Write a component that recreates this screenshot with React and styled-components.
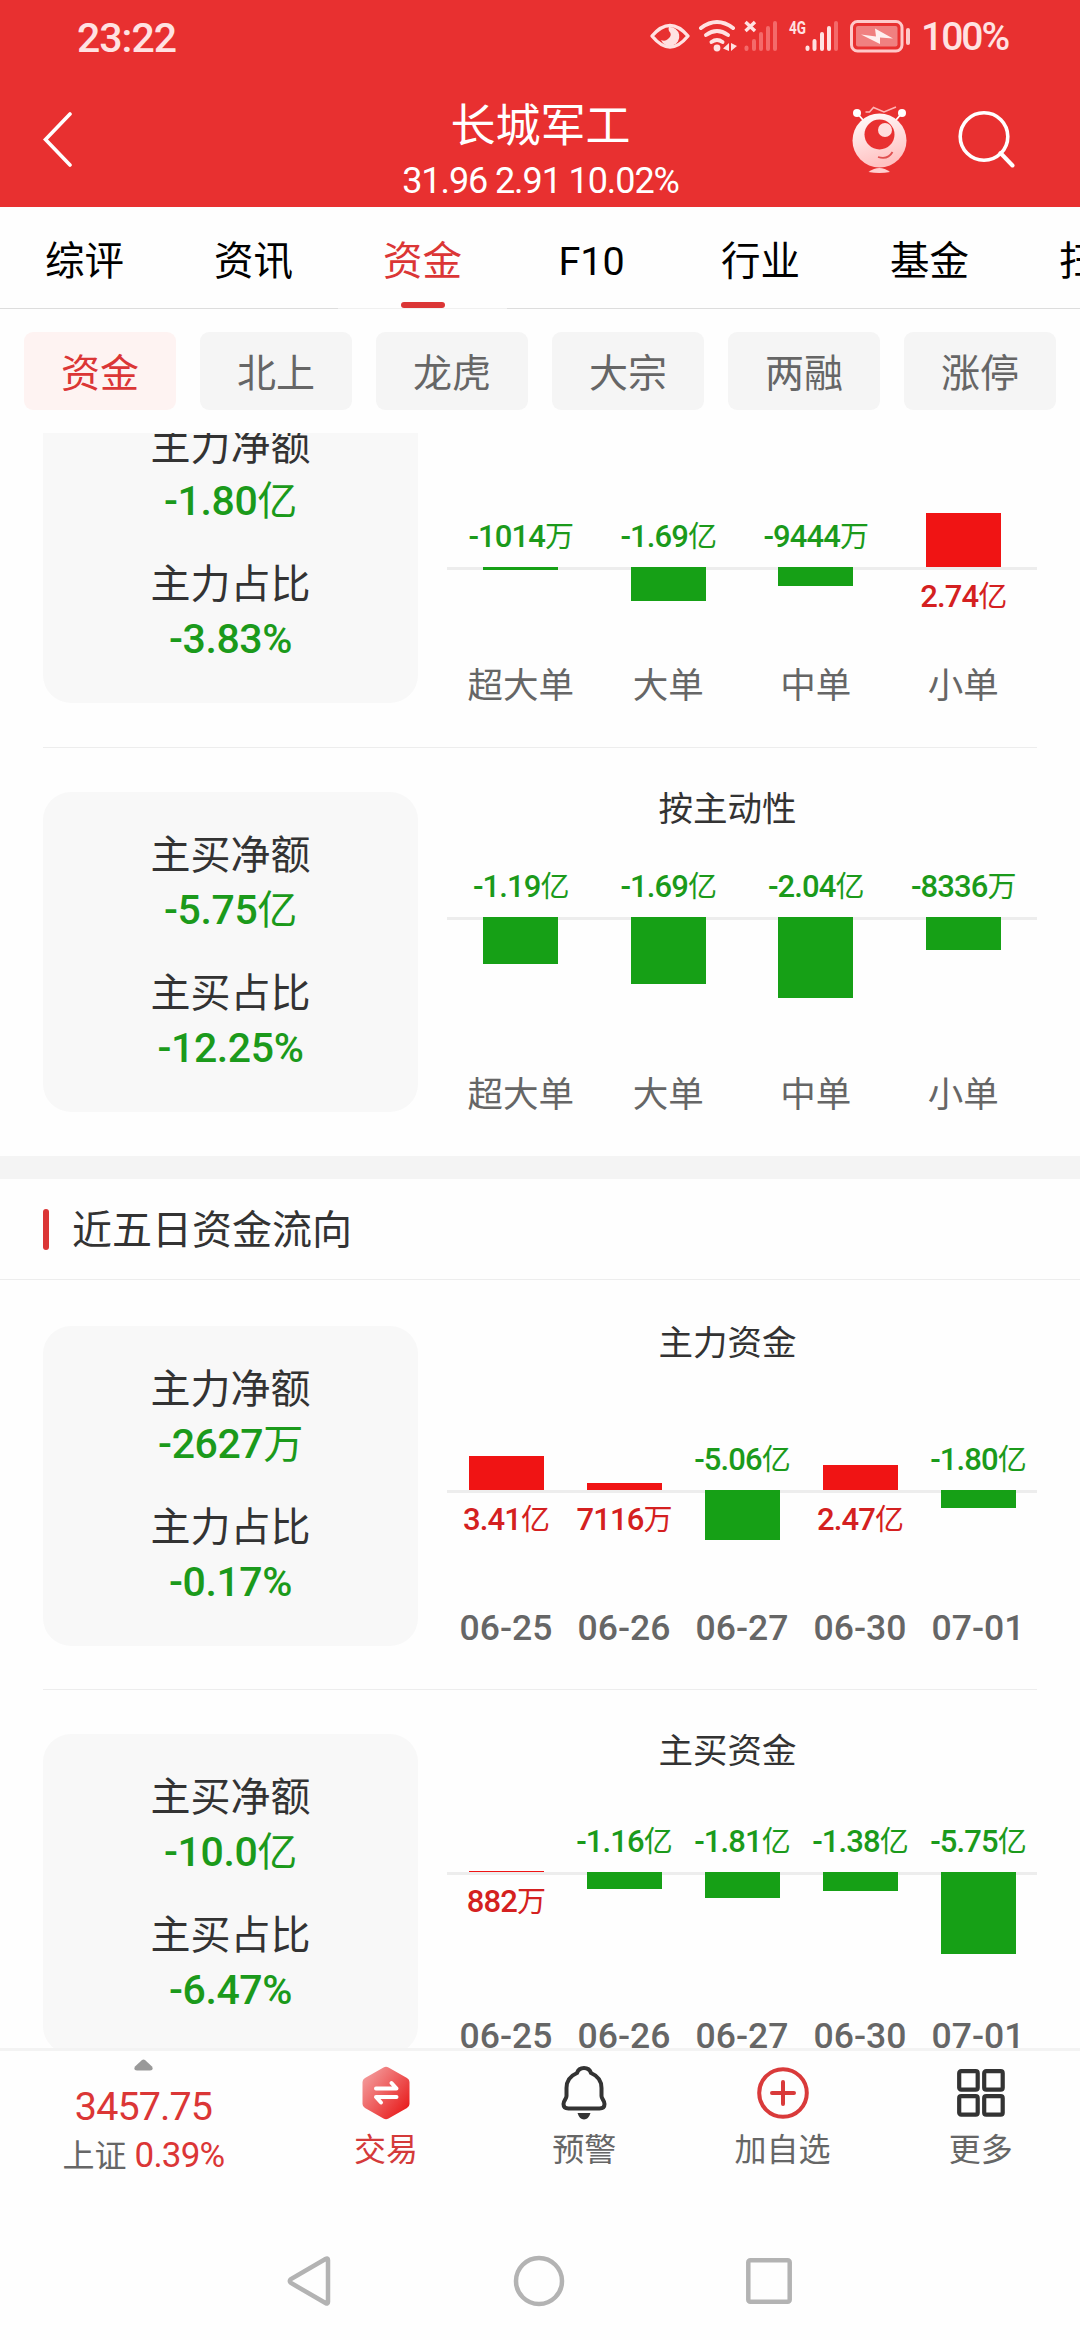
import React from "react"
import styled, { createGlobalStyle } from "styled-components"

const color = {
  header: "#e83030",
  primary: "#db3636",
  up: "#f01414",
  upText: "#d42020",
  down: "#16a016",
  downText: "#1b9a1b",
  gray50: "#f8f8f8",
  gray100: "#f4f4f4",
  gray200: "#ededed",
  gray600: "#666",
  gray800: "#333",
}

const tabs = ["综评", "资讯", "资金", "F10", "行业", "基金", "扫雷"]
const chips = ["资金", "北上", "龙虎", "大宗", "两融", "涨停"]

const todayMain = [
  { label: "超大单", value: "-1014", unit: "万", size: 3 },
  { label: "大单", value: "-1.69", unit: "亿", size: 34 },
  { label: "中单", value: "-9444", unit: "万", size: 19 },
  { label: "小单", value: "2.74", unit: "亿", size: 54 },
]

const todayActive = [
  { label: "超大单", value: "-1.19", unit: "亿", size: 47 },
  { label: "大单", value: "-1.69", unit: "亿", size: 67 },
  { label: "中单", value: "-2.04", unit: "亿", size: 81 },
  { label: "小单", value: "-8336", unit: "万", size: 33 },
]

const fiveMain = [
  { label: "06-25", value: "3.41", unit: "亿", size: 34 },
  { label: "06-26", value: "7116", unit: "万", size: 7 },
  { label: "06-27", value: "-5.06", unit: "亿", size: 50 },
  { label: "06-30", value: "2.47", unit: "亿", size: 25 },
  { label: "07-01", value: "-1.80", unit: "亿", size: 18 },
]

const fiveActive = [
  { label: "06-25", value: "882", unit: "万", size: 1 },
  { label: "06-26", value: "-1.16", unit: "亿", size: 17 },
  { label: "06-27", value: "-1.81", unit: "亿", size: 26 },
  { label: "06-30", value: "-1.38", unit: "亿", size: 19 },
  { label: "07-01", value: "-5.75", unit: "亿", size: 82 },
]

const FlowCard = ({ name, amount, unit, ratio, chart }) => (
  <FlowRow>
    <Summary>
      <SummaryLabel>{name}净额</SummaryLabel>
      <SummaryValue>
        {amount}
        <span>{unit}</span>
      </SummaryValue>
      <SummaryLabel $second>{name}占比</SummaryLabel>
      <SummaryValue>{ratio}</SummaryValue>
    </Summary>
    {chart}
  </FlowRow>
)

const Chart = ({ title, zero, data, dates }) => (
  <ChartBox>
    <ChartTitle>{title}</ChartTitle>
    <Plot>
      <Upper $height={zero - 36}>
        {data.map((d) => (
          <Slot key={d.label} $bottom>
            {d.value.startsWith("-") ? (
              <BarValue $down>
                {d.value}
                <span>{d.unit}</span>
              </BarValue>
            ) : (
              <Bar style={{ height: d.size }} />
            )}
          </Slot>
        ))}
      </Upper>
      <Lower>
        {data.map((d) => (
          <Slot key={d.label}>
            {d.value.startsWith("-") ? (
              <Bar $down style={{ height: d.size }} />
            ) : (
              <BarValue>
                {d.value}
                <span>{d.unit}</span>
              </BarValue>
            )}
          </Slot>
        ))}
      </Lower>
      <Labels>
        {data.map((d) => (
          <AxisLabel key={d.label} $date={dates}>
            {d.label}
          </AxisLabel>
        ))}
      </Labels>
    </Plot>
  </ChartBox>
)

const StatusIcons = () => (
  <svg width="262" height="36" viewBox="648 18 262 36" fill="none">
    {/* eye */}
    <path
      d="M651 36Q669 15 687 36Q669 58 651 36Z"
      stroke="#ffe2e2"
      strokeWidth="3.4"
      strokeLinejoin="round"
    />
    <path
      d="M668 27A9.5 9.5 0 1 1 660 40Q664 42 667 39Q672 35 668 31Q667 29 668 27Z"
      fill="#ffe2e2"
    />
    {/* wifi */}
    <g stroke="#ffe2e2" strokeWidth="4" strokeLinecap="round">
      <path d="M700 28Q716 16 732 28" />
      <path d="M705 35Q716 27 727 35" />
      <path d="M710.5 42Q716 38 721.5 42" />
    </g>
    <circle cx="716" cy="48" r="3.4" fill="#ffe2e2" />
    <path d="M728 43V51L722 48.500ZM730 43L736 46L730 51Z" fill="#ffe2e2" />
    {/* sim 1, no service */}
    <path d="M744.500 22L754 31M754 22L744.500 31" stroke="#ffe2e2" strokeWidth="3.4" />
    <g stroke="#f46a6a" strokeWidth="4" strokeLinecap="round">
      <path d="M745.500 47.500V49M753 41V49M760 34V49M767 28V49M774 23V49" />
    </g>
    {/* sim 2 */}
    <text
      x="788"
      y="34"
      fill="#ffe2e2"
      fontSize="18"
      fontWeight="700"
      fontFamily="Roboto, sans-serif"
      textLength="17"
      lengthAdjust="spacingAndGlyphs"
    >
      4G
    </text>
    <g stroke="#ffe2e2" strokeWidth="4" strokeLinecap="round">
      <path d="M806.500 47.500V49M813.500 41V49M821 34V49M828 28V49" />
      <path d="M835 23V49" stroke="#f46a6a" />
    </g>
    {/* battery */}
    <rect x="850.5" y="21.500" width="50.500" height="29.500" rx="6" stroke="#ffc9c9" strokeWidth="3" />
    <rect x="855" y="26" width="41.500" height="20.500" rx="2" fill="#f08080" />
    <path d="M860 34.500L875 36.500L874 28.500L892 38.500L879 37.500L879 44Z" fill="#fff0f0" />
    <rect x="905" y="28" width="4" height="17" rx="2" fill="#ffc9c9" />
  </svg>
)

const BackIcon = () => (
  <svg width="30" height="56" viewBox="0 0 30 56" fill="none">
    <path d="M27 2L2.500 27.500L27 53" stroke="#fff" strokeWidth="3.600" strokeLinecap="round" />
  </svg>
)

const RobotIcon = () => (
  <svg width="56" height="68" viewBox="852 106 56 68" fill="none">
    <defs>
      <linearGradient id="robot" x1="0" y1="0" x2="0.3" y2="1">
        <stop offset="0" stopColor="#fff" />
        <stop offset="1" stopColor="#ffc2c2" />
      </linearGradient>
    </defs>
    <path d="M865.500 112H869.500L873.500 107.500L884 112L896 107" stroke="#ffb5b5" strokeWidth="1.6" />
    <path d="M857 113L863 120M902 113L896 120" stroke="#fff" strokeWidth="1.8" />
    <circle cx="857" cy="113" r="4" fill="#fff" />
    <circle cx="902" cy="113" r="4" fill="#fff" />
    <circle cx="879.500" cy="140.500" r="27" fill="url(#robot)" />
    <circle cx="879.500" cy="134.500" r="15" fill="#e83030" />
    <circle cx="885" cy="130" r="7" fill="#ffdede" />
    <path d="M878 157Q888 160 892.500 152" stroke="#e05050" strokeWidth="1.8" />
    <path d="M868.500 172Q879.500 164 890 172Q879.500 174 868.500 172Z" fill="#ffd0d0" />
  </svg>
)

const SearchIcon = () => (
  <svg width="58" height="58" viewBox="0 0 58 58" fill="none" stroke="#fff" strokeWidth="3.600">
    <circle cx="26" cy="26.500" r="23.800" />
    <path d="M42.500 43L54.500 55.500" strokeLinecap="round" strokeWidth="4" />
  </svg>
)

const TradeIcon = () => (
  <svg width="50" height="54" viewBox="0 0 50 54" fill="none">
    <defs>
      <linearGradient id="trade" x1="0" y1="0.1" x2="0.9" y2="0.9">
        <stop offset="0" stopColor="#f4a3a3" />
        <stop offset="1" stopColor="#e81c1c" />
      </linearGradient>
    </defs>
    <path
      d="M22.500 1.500Q25 0 27.500 1.500L46 12Q48.500 13.500 48.500 16V38Q48.500 40.500 46 42L27.500 52.500Q25 54 22.500 52.500L4 42Q1.500 40.500 1.500 38V16Q1.500 13.500 4 12Z"
      fill="url(#trade)"
    />
    <g stroke="#fff" strokeWidth="4" strokeLinecap="round" strokeLinejoin="round">
      <path d="M15 22.500H35.500L30.500 17" />
      <path d="M35.500 31H15L20 36.500" />
    </g>
  </svg>
)

const BellIcon = () => (
  <svg width="50" height="54" viewBox="0 0 50 54" fill="none">
    <path
      d="M25 2C21 2 19 4 18 7C11 10 7.500 15 7.500 22V30C7.500 33 4.500 34.500 4.500 38C4.500 41 6.500 42.500 9.500 42.500H40.500C43.500 42.500 45.500 41 45.500 38C45.500 34.500 42.500 33 42.500 30V22C42.500 15 39 10 32 7C31 4 29 2 25 2Z"
      stroke="#333"
      strokeWidth="4"
      strokeLinejoin="round"
    />
    <path d="M18.500 47H31.500Q29.500 53.500 25 53.500Q20.500 53.500 18.500 47Z" fill="#333" />
  </svg>
)

const PlusIcon = () => (
  <svg width="52" height="54" viewBox="0 0 52 54" fill="none" stroke="#d93a3a" strokeWidth="4">
    <circle cx="26" cy="27" r="23.800" />
    <path d="M15 27H37M26 16V38" strokeLinecap="round" />
  </svg>
)

const MoreIcon = () => (
  <svg width="50" height="54" viewBox="0 0 50 54" fill="none" stroke="#333" strokeWidth="4.200">
    <rect x="3.200" y="5.200" width="18.500" height="18.500" rx="2" />
    <rect x="28.200" y="5.200" width="18.500" height="18.500" rx="2" />
    <rect x="3.200" y="30.200" width="18.500" height="18.500" rx="2" />
    <rect x="28.200" y="30.200" width="18.500" height="18.500" rx="2" />
  </svg>
)

const App = () => {
  return (
    <Page>
      <GlobalStyle />
      <Header>
        <StatusBar>
          <Clock>23:22</Clock>
          <StatusIcons />
          <Battery>100%</Battery>
        </StatusBar>
        <TitleBar>
          <BackIcon />
          <Title>
            <h1>长城军工</h1>
            <p>31.96 2.91 10.02%</p>
          </Title>
          <Actions>
            <RobotIcon />
            <SearchIcon />
          </Actions>
        </TitleBar>
      </Header>
      <Tabs>
        {tabs.map((tab) => (
          <Tab key={tab} $active={tab === "资金"}>
            {tab}
          </Tab>
        ))}
      </Tabs>
      <Chips>
        {chips.map((chip) => (
          <Chip key={chip} $active={chip === "资金"}>
            {chip}
          </Chip>
        ))}
      </Chips>
      <Scroll>
        <Content>
          <FlowCard
            name="主力"
            amount="-1.80"
            unit="亿"
            ratio="-3.83%"
            chart={<Chart zero={184} data={todayMain} />}
          />
          <Divider />
          <FlowCard
            name="主买"
            amount="-5.75"
            unit="亿"
            ratio="-12.25%"
            chart={<Chart title="按主动性" zero={125} data={todayActive} />}
          />
          <Band />
          <SectionTitle>近五日资金流向</SectionTitle>
          <FlowCard
            name="主力"
            amount="-2627"
            unit="万"
            ratio="-0.17%"
            chart={<Chart title="主力资金" zero={164} data={fiveMain} dates />}
          />
          <Divider $tight />
          <FlowCard
            name="主买"
            amount="-10.0"
            unit="亿"
            ratio="-6.47%"
            chart={<Chart title="主买资金" zero={138} data={fiveActive} dates />}
          />
        </Content>
      </Scroll>
      <BottomBar>
        <IndexItem>
          <svg width="19" height="12" viewBox="0 0 19 12">
            <path
              d="M8 1Q9.500 0 11 1L18 7.500Q20 11.500 16 11.500H3Q-1 11.500 1 7.500Z"
              fill="#999"
            />
          </svg>
          <IndexValue>3457.75</IndexValue>
          <IndexChange>
            上证 <b>0.39%</b>
          </IndexChange>
        </IndexItem>
        <BarItem $active>
          <TradeIcon />
          交易
        </BarItem>
        <BarItem>
          <BellIcon />
          预警
        </BarItem>
        <BarItem>
          <PlusIcon />
          加自选
        </BarItem>
        <BarItem>
          <MoreIcon />
          更多
        </BarItem>
      </BottomBar>
      <SystemNav>
        <svg width="44" height="52" viewBox="0 0 44 52">
          <path d="M41 5V47Q41 49.500 38.500 48L4 28Q1.500 26 4 24L38.500 4Q41 2.500 41 5Z" />
        </svg>
        <svg width="52" height="52" viewBox="0 0 52 52">
          <circle cx="26" cy="26" r="23" />
        </svg>
        <svg width="46" height="46" viewBox="0 0 46 46">
          <rect x="2.300" y="2.300" width="41.400" height="41.400" rx="2" />
        </svg>
      </SystemNav>
    </Page>
  )
}

const GlobalStyle = createGlobalStyle`
  * {
    box-sizing: border-box;
    margin: 0;
    padding: 0;
  }

  body {
    background: #fefefe;
    font-family: Roboto, "Noto Sans CJK SC", sans-serif;
  }

  svg {
    display: block;
    flex-shrink: 0;
  }
`

const Page = styled.div`
  display: flex;
  flex-direction: column;
  width: 1080px;
  height: 2340px;
  overflow: hidden;
  background: #fefefe;
`

const Header = styled.header`
  height: 207px;
  flex-shrink: 0;
  color: #fff;
  background: ${color.header};
`

const StatusBar = styled.div`
  display: flex;
  align-items: center;
  height: 76px;
  padding: 0 72px 4px 77px;
  color: #ffe2e2;
`

const Clock = styled.span`
  flex: 1;
  padding-top: 3px;
  font-size: 41px;
  font-weight: 500;
  letter-spacing: -1px;
`

const Battery = styled.span`
  width: 97px;
  padding: 2px 0 0 10px;
  font-size: 39px;
  font-weight: 500;
  letter-spacing: -2px;
`

const TitleBar = styled.div`
  display: grid;
  grid-template-columns: 1fr auto 1fr;
  align-items: start;
  padding: 22px 64px 0 43px;

  > svg {
    margin-top: 14px;
  }
`

const Title = styled.div`
  padding-top: 2px;
  text-align: center;
  margin-right: -22px;

  h1 {
    font-size: 45px;
    font-weight: 400;
    line-height: 54px;
  }

  p {
    font-size: 36px;
    line-height: 54px;
    letter-spacing: -1.1px;
  }
`

const Actions = styled.div`
  display: flex;
  justify-content: flex-end;
  gap: 50px;
  margin-top: 8px;

  svg:last-child {
    margin-top: 4px;
  }
`

const Tabs = styled.nav`
  display: flex;
  height: 102px;
  flex-shrink: 0;
`

const Tab = styled.div`
  display: flex;
  flex: 0 0 169px;
  flex-direction: column;
  align-items: center;
  justify-content: space-between;
  padding-top: 14px;
  border-bottom: 1px solid ${(p) => (p.$active ? "#f0f0f0" : "#ddd")};
  color: ${(p) => (p.$active ? color.primary : "#000")};
  font-size: 39.5px;
  line-height: 81px;
  white-space: nowrap;

  &::after {
    content: "";
    width: 44px;
    height: 6px;
    border-radius: 3px;
    background: ${(p) => (p.$active ? color.primary : "transparent")};
  }
`

const Chips = styled.div`
  display: flex;
  gap: 24px;
  padding: 23px 24px;
  flex-shrink: 0;
`

const Chip = styled.div`
  flex: 1;
  height: 78px;
  padding-top: 3px;
  border-radius: 9px;
  font-size: 39px;
  line-height: 78px;
  text-align: center;
  color: ${(p) => (p.$active ? color.primary : color.gray600)};
  background: ${(p) => (p.$active ? "#fef3f2" : "#f5f5f5")};
`

const Scroll = styled.main`
  height: 1615px;
  flex-shrink: 0;
  overflow: hidden;
`

const Content = styled.div`
  margin-top: -50px;
`

const FlowRow = styled.section`
  display: flex;
  height: 320px;
  padding: 0 43px;
`

const Summary = styled.div`
  width: 375px;
  height: 320px;
  padding-top: 36px;
  border-radius: 28px;
  text-align: center;
  background: ${color.gray50};
`

const SummaryLabel = styled.div`
  margin-top: ${(p) => (p.$second ? 28 : 0)}px;
  font-size: 40px;
  line-height: 55px;
  color: ${color.gray800};
`

const SummaryValue = styled.div`
  font-size: 41px;
  font-weight: 500;
  line-height: 55px;
  letter-spacing: -0.4px;
  color: ${color.downText};

  span {
    font-size: 40px;
    font-weight: 400;
  }
`

const ChartBox = styled.div`
  flex: 1;
  height: 320px;
`

const ChartTitle = styled.h3`
  height: 36px;
  font-size: 34.5px;
  font-weight: 400;
  line-height: 35px;
  text-align: center;
  color: ${color.gray800};
`

const Plot = styled.div`
  display: flex;
  flex-direction: column;
  height: 284px;
  margin-left: 29px;
`

const Upper = styled.div`
  display: flex;
  height: ${(p) => p.$height}px;
`

const Lower = styled.div`
  display: flex;
  flex: 1;
  background: linear-gradient(${color.gray200}, ${color.gray200}) 0 0 / 100% 3px no-repeat;
`

const Slot = styled.div`
  display: flex;
  flex: 1 1 0;
  min-width: 0;
  justify-content: center;
  align-items: ${(p) => (p.$bottom ? "flex-end" : "flex-start")};
`

const Bar = styled.div`
  width: 75px;
  background: ${(p) => (p.$down ? color.down : color.up)};
`

const BarValue = styled.div`
  padding: ${(p) => (p.$down ? "0 0 12px" : "12px 0 0")};
  font-size: 31px;
  font-weight: 500;
  line-height: 36px;
  letter-spacing: -0.9px;
  white-space: nowrap;
  color: ${(p) => (p.$down ? color.downText : color.upText)};

  span {
    font-size: 29px;
    font-weight: 400;
  }
`

const Labels = styled.div`
  display: flex;
  height: 42px;
`

const AxisLabel = styled.div`
  flex: 1 1 0;
  font-size: 35.5px;
  font-weight: ${(p) => (p.$date ? 500 : 400)};
  line-height: ${(p) => (p.$date ? 48 : 50)}px;
  text-align: center;
  color: ${color.gray600};
`

const Divider = styled.hr`
  height: 1px;
  margin: ${(p) => (p.$tight ? 43 : 44)}px 43px 44px;
  border: 0;
  background: ${color.gray200};
`

const Band = styled.div`
  height: 23px;
  margin-top: 44px;
  background: ${color.gray100};
`

const SectionTitle = styled.h2`
  display: flex;
  align-items: center;
  height: 101px;
  margin-bottom: 46px;
  padding: 0 0 5px 43px;
  border-bottom: 1px solid ${color.gray200};
  font-size: 40px;
  font-weight: 400;
  color: ${color.gray800};

  &::before {
    content: "";
    width: 6px;
    height: 41px;
    margin: 5px 23px 0 0;
    border-radius: 3px;
    background: ${color.primary};
  }
`

const BottomBar = styled.footer`
  display: flex;
  height: 174px;
  flex-shrink: 0;
  border-top: 3px solid #f3f3f3;
`

const IndexItem = styled.div`
  display: flex;
  flex-direction: column;
  align-items: center;
  width: 287px;
  padding-top: 8px;
`

const IndexValue = styled.div`
  margin-top: 13px;
  font-size: 39.5px;
  line-height: 46px;
  letter-spacing: -0.9px;
  color: ${color.primary};
`

const IndexChange = styled.div`
  margin-top: 3px;
  font-size: 32px;
  line-height: 46px;
  color: ${color.gray600};

  b {
    font-size: 35px;
    font-weight: 400;
    letter-spacing: -0.8px;
    color: ${color.primary};
  }
`

const BarItem = styled.div`
  display: flex;
  flex: 1;
  flex-direction: column;
  align-items: center;
  padding-top: 15px;
  font-size: 32px;
  line-height: 60px;
  color: ${(p) => (p.$active ? "#d43a3a" : color.gray600)};
`

const SystemNav = styled.div`
  display: flex;
  flex: 1;
  align-items: center;
  justify-content: space-between;
  padding: 0 288px 0 287px;

  svg {
    fill: none;
    stroke: #b3b3b3;
    stroke-width: 4.500px;
  }
`

export default App
